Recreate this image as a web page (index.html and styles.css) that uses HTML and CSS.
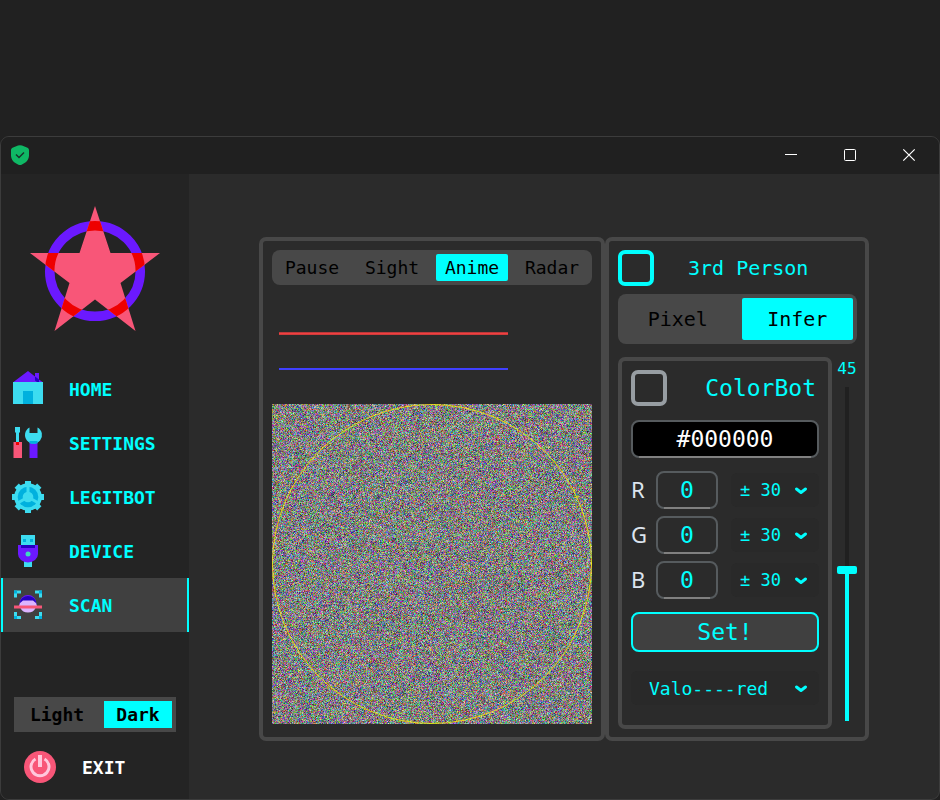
FILE: index.html
```html
<!DOCTYPE html>
<html lang="en">
<head>
<meta charset="utf-8">
<meta name="viewport" content="width=device-width, initial-scale=1">
<title>Scan</title>
<link rel="stylesheet" href="styles.css">
</head>
<body>
<div class="window">
  <header class="titlebar">
    <svg class="shield" width="20" height="20" viewBox="0 0 20 20" aria-hidden="true">
      <path d="M8 .5Q10-.2 12 .5L17.5 2.700Q19 3.500 19 5V10.500C19 15 15.500 18 12 19.500Q10 20.500 8 19.500C4.500 18 1 15 1 10.500V5Q1 3.500 2.500 2.700Z" fill="#0fb865"/>
      <path d="M6 9.500 9 12.500 14 7.500" fill="none" stroke="#18332a" stroke-width="1.500"/>
    </svg>
    <div class="caption">
      <button type="button" aria-label="Minimize"><svg width="12" height="12" viewBox="0 0 12 12"><path d="M0 5.500H12" stroke="#fff"/></svg></button>
      <button type="button" aria-label="Maximize"><svg width="12" height="12" viewBox="0 0 12 12"><rect x=".5" y=".5" width="11" height="11" rx="1" fill="none" stroke="#fff"/></svg></button>
      <button type="button" aria-label="Close"><svg width="12" height="12" viewBox="0 0 12 12"><path d="M.3.300 11.700 11.700M11.700.300.300 11.700" stroke="#fff" stroke-width="1.200"/></svg></button>
    </div>
  </header>

  <div class="body">
    <aside class="sidebar">
      <svg class="logo" width="130" height="126" viewBox="0 0 130 126" aria-hidden="true">
        <defs><clipPath id="star"><path d="M65 0 80.500 47H130L90.500 77 105.500 125 65 93.500 24.500 125 39.500 77 0 47H49.500Z"/></clipPath></defs>
        <circle cx="65" cy="65" r="45.300" fill="none" stroke="#6b19ff" stroke-width="9.500"/>
        <path d="M65 0 80.500 47H130L90.500 77 105.500 125 65 93.500 24.500 125 39.500 77 0 47H49.500Z" fill="#f85678"/>
        <circle cx="65" cy="65" r="45.300" fill="none" stroke="#ee0000" stroke-width="9.500" clip-path="url(#star)"/>
      </svg>

      <nav class="nav">
        <a class="nav-item" href="#home">
          <svg width="32" height="34" viewBox="0 0 32 34" aria-hidden="true">
            <path d="M16-1 1.500 10H30.500L27 7.500V1H23V4.500Z" fill="#6b19ff"/>
            <path d="M23 4.500 27 7.500V10H25L23 8.500Z" fill="#2500c0"/>
            <rect x="1" y="10" width="30" height="22" fill="#3ddcf0"/>
            <rect x="11" y="19" width="10" height="13" fill="#00b1de"/>
          </svg>
          <span>HOME</span>
        </a>
        <a class="nav-item" href="#settings">
          <svg width="32" height="34" viewBox="0 0 32 34" aria-hidden="true">
            <path d="M3 1H8V6L7 7V17H4V7L3 6Z" fill="#3ddcf0"/>
            <rect x="1.500" y="16" width="8.500" height="16" fill="#f85678"/>
            <rect x="4" y="16" width="3" height="3" fill="#ee0000"/>
            <rect x="17.500" y="16" width="8" height="16" fill="#6b19ff"/>
            <path d="M17.500 1.500A8.500 8.500 0 1 0 25.500 1.500V7H17.500Z" fill="#3ddcf0"/>
            <path d="M17.500 15H25.500V17.200Q21.500 18.500 17.500 17.200Z" fill="#00b1de"/>
          </svg>
          <span>SETTINGS</span>
        </a>
        <a class="nav-item" href="#legitbot">
          <svg width="32" height="34" viewBox="0 0 32 34" aria-hidden="true">
            <g transform="translate(16 17)">
              <circle r="13.800" fill="#3ddcf0"/>
              <g fill="#3ddcf0">
                <rect x="-3" y="-16" width="6" height="32"/>
                <rect x="-3" y="-16" width="6" height="32" transform="rotate(45)"/>
                <rect x="-3" y="-16" width="6" height="32" transform="rotate(90)"/>
                <rect x="-3" y="-16" width="6" height="32" transform="rotate(135)"/>
              </g>
              <circle r="10.300" fill="#00b1de"/>
              <circle r="5.300" fill="#3ddcf0"/>
              <path d="M0 0V-11M0 0 9.500 5.500M0 0-9.500 5.500" stroke="#3ddcf0" stroke-width="3"/>
            </g>
          </svg>
          <span>LEGITBOT</span>
        </a>
        <a class="nav-item" href="#device">
          <svg width="32" height="34" viewBox="0 0 32 34" aria-hidden="true">
            <rect x="9" y="1" width="14" height="11" fill="#3ddcf0"/>
            <path d="M11 5H14V8H11ZM18 5H21V8H18Z" fill="#00b1de"/>
            <rect x="12" y="27" width="8" height="6" fill="#3ddcf0"/>
            <path d="M6 11H26V20A10 8.500 0 0 1 6 20Z" fill="#6b19ff"/>
            <rect x="9" y="11" width="14" height="3" fill="#2500c0"/>
            <circle cx="16" cy="20" r="2.500" fill="#3ddcc0"/>
          </svg>
          <span>DEVICE</span>
        </a>
        <a class="nav-item active" href="#scan" aria-current="page">
          <svg width="32" height="34" viewBox="0 0 32 34" aria-hidden="true">
            <path d="M3.500 9.500V4H9M23 4H28.500V9.500M3.500 24V29.500H9M23 29.500H28.500V24" fill="none" stroke="#3ddcf0" stroke-width="3"/>
            <path d="M2 2.500H5V5.500H2ZM27 2.500H30V5.500H27ZM2 28H5V31H2ZM27 28H30V31H27Z" fill="#00b1de"/>
            <circle cx="16" cy="15.500" r="8.500" fill="#6b19ff"/>
            <path d="M8 17V14.500A8 6.500 0 0 1 24 14.500V17Z" fill="#2500c0"/>
            <path d="M7 18Q8 14 11 12.500H21Q24 14 25 18L23.500 20A8 7 0 0 1 8.500 20Z" fill="#dcb4ff"/>
            <rect x="2" y="17.500" width="28" height="3" fill="#f85678"/>
          </svg>
          <span>SCAN</span>
        </a>
      </nav>

      <div class="sidebar-foot">
        <div class="theme" role="group" aria-label="Theme">
          <button type="button">Light</button>
          <button type="button" class="on" aria-pressed="true">Dark</button>
        </div>
        <button type="button" class="exit">
          <svg width="32" height="32" viewBox="0 0 32 32" aria-hidden="true">
            <circle cx="16" cy="16" r="16" fill="#f85678"/>
            <path d="M11.500 8A9 9 0 1 0 20.500 8" fill="none" stroke="#ffc8dc" stroke-width="3"/>
            <path d="M16 4V16" stroke="#ffc8dc" stroke-width="4"/>
          </svg>
          <span>EXIT</span>
        </button>
      </div>
    </aside>

    <main class="main">
      <section class="panel preview">
        <div class="segments" role="group" aria-label="View">
          <button type="button">Pause</button>
          <button type="button">Sight</button>
          <button type="button" class="on" aria-pressed="true">Anime</button>
          <button type="button">Radar</button>
        </div>
        <div class="traces">
          <div class="trace red"></div>
          <div class="trace blue"></div>
        </div>
        <canvas id="scan-view" width="320" height="320"></canvas>
      </section>

      <section class="panel controls">
        <label class="check-row third">
          <input type="checkbox" class="check accent">
          <span>3rd Person</span>
        </label>
        <div class="segments large" role="group" aria-label="Mode">
          <button type="button">Pixel</button>
          <button type="button" class="on" aria-pressed="true">Infer</button>
        </div>
        <div class="columns">
          <div class="group">
            <label class="check-row color">
              <input type="checkbox" class="check">
              <span>ColorBot</span>
            </label>
            <div class="field hex"><input type="text" value="#000000" aria-label="Hex colour"></div>
            <div class="channels">
              <div class="channel">
                <label for="r">R</label>
                <div class="field"><input id="r" type="text" value="0"></div>
                <div class="select"><select aria-label="R tolerance"><option>± 30</option></select><svg width="12" height="8" viewBox="0 0 12 8" aria-hidden="true"><path d="M1.500 2 6 5.500 10.500 2"/></svg></div>
              </div>
              <div class="channel">
                <label for="g">G</label>
                <div class="field"><input id="g" type="text" value="0"></div>
                <div class="select"><select aria-label="G tolerance"><option>± 30</option></select><svg width="12" height="8" viewBox="0 0 12 8" aria-hidden="true"><path d="M1.500 2 6 5.500 10.500 2"/></svg></div>
              </div>
              <div class="channel">
                <label for="b">B</label>
                <div class="field"><input id="b" type="text" value="0"></div>
                <div class="select"><select aria-label="B tolerance"><option>± 30</option></select><svg width="12" height="8" viewBox="0 0 12 8" aria-hidden="true"><path d="M1.500 2 6 5.500 10.500 2"/></svg></div>
              </div>
            </div>
            <button type="button" class="set">Set!</button>
            <div class="select preset"><select aria-label="Preset"><option>Valo----red</option></select><svg width="12" height="8" viewBox="0 0 12 8" aria-hidden="true"><path d="M1.500 2 6 5.500 10.500 2"/></svg></div>
          </div>
          <div class="level">
            <label for="level">45</label>
            <input id="level" type="range" min="0" max="100" value="45">
          </div>
        </div>
      </section>
    </main>
  </div>
</div>
<script src="script.js"></script>
</body>
</html>
```
FILE: styles.css
```css
* { box-sizing: border-box; }

:root {
  --accent: #00ffff;
  --frame: #484848;
  --surface: #2b2b2b;
  --mono: "DejaVu Sans Mono", monospace;
}

body {
  margin: 0;
  min-height: 100vh;
  padding-top: 136px;
  display: flex;
  flex-direction: column;
  background: #212121;
  color: var(--accent);
  font-family: var(--mono);
  font-size: 18px;
}

button, input, select { font: inherit; color: inherit; margin: 0; }
button { background: none; border: 0; padding: 0; }
svg { display: block; flex: none; overflow: visible; }

.window {
  flex: 1;
  display: flex;
  flex-direction: column;
  border: 1px solid #3c3c3c;
  border-radius: 9px;
  overflow: hidden;
  background: var(--surface);
}

.titlebar {
  height: 37px;
  padding: 0 1px 1px 9px;
  display: flex;
  align-items: center;
  justify-content: space-between;
  background: #202020;
}
.caption { display: flex; height: 100%; }
.caption button { width: 59px; display: grid; place-items: center; }

.body { flex: 1; display: flex; }

.sidebar {
  width: 188px;
  flex: none;
  display: flex;
  flex-direction: column;
  background: #242424;
  font-weight: bold;
}
.logo { margin: 32px auto 30px; }
.nav-item {
  height: 54px;
  padding-left: 9px;
  display: flex;
  align-items: center;
  gap: 25px;
  color: var(--accent);
  text-decoration: none;
  border: solid transparent;
  border-width: 0 2px;
}
.nav-item.active { background: #404040; border-color: var(--accent); }

.sidebar-foot { margin-top: auto; padding: 0 13px 16px; }
.theme {
  display: grid;
  grid-template-columns: 86px 1fr;
  height: 35px;
  padding: 4px 4px 4px 0;
  background: var(--frame);
  color: #000;
}
.theme button { font-weight: bold; }
.theme .on { margin-left: 4px; }
.on { background: var(--accent); }
.exit {
  margin-top: 19px;
  padding-left: 10px;
  display: flex;
  align-items: center;
  gap: 26px;
  color: #fff;
  font-weight: bold;
}

.main {
  flex: 1;
  display: flex;
  align-items: center;
  justify-content: center;
  padding-top: 5px;
}
.panel {
  border: 4px solid var(--frame);
  border-radius: 7px;
  padding: 9px 9px 13px;
}
.segments {
  display: grid;
  grid-auto-columns: 1fr;
  grid-auto-flow: column;
  height: 35px;
  border-radius: 8px;
  background: var(--frame);
  color: #000;
}
.segments button { margin: 4px; border-radius: 2px; }
.segments.large { height: 50px; font-size: 20px; }

.traces {
  display: flex;
  flex-direction: column;
  gap: 33px;
  width: 229px;
  margin: 47px 7px 34px;
}
.trace { height: 2px; }
.trace.red { height: 3px; background: linear-gradient(#a03437, #f04040, #c03a3a); }
.trace.blue { background: #4040ff; }
canvas { display: block; }

.controls { padding: 9px 8px 8px 9px; }
.check-row { display: flex; align-items: center; height: 36px; }
.check {
  appearance: none;
  width: 36px;
  height: 36px;
  flex: none;
  border: 4px solid #979da2;
  border-radius: 7px;
}
.check.accent { border-color: var(--accent); }
.third { gap: 34px; font-size: 20px; margin-bottom: 8px; }
.color { justify-content: space-between; padding-right: 3px; }

.columns { display: flex; gap: 5px; margin-top: 13px; }
.group {
  width: 214px;
  height: 372px;
  border: 4px solid var(--frame);
  border-radius: 7px;
  padding: 9px;
  font-size: 23px;
}
.field { position: relative; height: 38px; }
.field input {
  width: 100%;
  height: 100%;
  padding: 0;
  text-align: center;
  background: transparent;
  border: 2px solid #565b5e;
  border-radius: 8px;
}
.field::after {
  content: "";
  position: absolute;
  inset: auto 8px 0;
  height: 2px;
  background: #808080;
}
.hex { margin: 14px 0 13px; color: #fff; }
.hex input { background: #000; }

.channels { display: grid; gap: 7px; }
.channel {
  display: grid;
  grid-template-columns: 25px 62px 13px 88px;
  align-items: center;
}
.channel label { font: 22px/32px "Noto Sans", sans-serif; padding-bottom: 2px; color: #dce4ee; }
.channel .select { grid-column: 4; font-size: 17px; }

.select { position: relative; height: 34px; }
.select select {
  appearance: none;
  width: 100%;
  height: 100%;
  padding: 0 28px 0 9px;
  border: 0;
  border-radius: 6px;
  background: #292929;
}
.select svg {
  position: absolute;
  right: 12px;
  top: 14px;
  pointer-events: none;
  fill: none;
  stroke: var(--accent);
  stroke-width: 3;
  stroke-linecap: round;
  stroke-linejoin: round;
}
.preset { margin-top: 19px; font-size: 18px; }
.preset select { padding-left: 18px; }

.set {
  display: block;
  width: 100%;
  height: 40px;
  margin-top: 13px;
  border: 2px solid var(--accent);
  border-radius: 8px;
  background: #404040;
}

.level {
  display: flex;
  flex-direction: column;
  align-items: center;
  width: 20px;
  font-size: 16px;
  line-height: 24px;
}
.level input {
  appearance: none;
  writing-mode: vertical-lr;
  direction: rtl;
  width: 20px;
  height: 334px;
  margin-top: 6px;
  background: linear-gradient(to top, var(--accent) 45%, #202020 45%) center / 4px 100% no-repeat;
}
.level input::-webkit-slider-thumb {
  appearance: none;
  width: 20px;
  height: 8px;
  border-radius: 2px;
  background: var(--accent);
}
```
FILE: script.js
```js
// Fill the scan view with colour static and outline the field of view.
const canvas = document.getElementById("scan-view");
const ctx = canvas.getContext("2d");
const size = canvas.width;
const frame = ctx.createImageData(size, size);

let seed = 12345;
function random() {
  seed ^= seed << 13;
  seed ^= seed >>> 17;
  seed ^= seed << 5;
  return (seed >>> 0) / 4294967296;
}

// Averaging two samples keeps the static soft around mid grey.
for (let i = 0; i < frame.data.length; i++) {
  frame.data[i] = i % 4 === 3 ? 255 : 12 + (random() + random()) * 116;
}
ctx.putImageData(frame, 0, 0);

ctx.strokeStyle = "rgba(255, 240, 0, 0.8)";
ctx.lineWidth = 1;
ctx.beginPath();
ctx.arc(size / 2, size / 2, size / 2 - 0.5, 0, Math.PI * 2);
ctx.stroke();
```
